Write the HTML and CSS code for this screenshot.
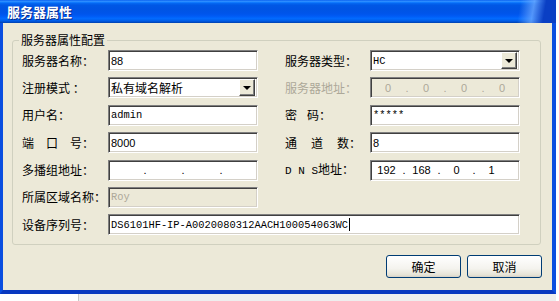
FILE: index.html
```html
<!DOCTYPE html>
<html>
<head>
	<meta charset="UTF-8">
	<title>服务器属性</title>
	<link rel="stylesheet" href="styles.css">
</head>
<body>
	<div class="window">
		<div class="titlebar"><span class="title">服务器属性</span></div>
		<div class="client">
			<fieldset class="group">
				<legend>服务器属性配置</legend>
				<div class="form">
					<label class="lbl">服务器名称：</label>
					<div class="field sans">88</div>
					<span></span>
					<label class="lbl">服务器类型：</label>
					<div class="field combo mono"><span class="val">HC</span><span class="drop"></span></div>

					<label class="lbl">注册模式 ：</label>
					<div class="field combo cjk"><span class="val">私有域名解析</span><span class="drop"></span></div>
					<span></span>
					<label class="lbl off">服务器地址：</label>
					<div class="field ip disabled">
						<span class="seg">0</span><span class="dot">.</span>
						<span class="seg">0</span><span class="dot">.</span>
						<span class="seg">0</span><span class="dot">.</span>
						<span class="seg">0</span>
					</div>

					<label class="lbl">用户名：</label>
					<div class="field mono">admin</div>
					<span></span>
					<label class="lbl"><span class="sp10">密</span>码：</label>
					<div class="field mono">*****</div>

					<label class="lbl"><span class="sp12">端口</span>号：</label>
					<div class="field sans">8000</div>
					<span></span>
					<label class="lbl"><span class="sp14">通道</span>数：</label>
					<div class="field sans">8</div>

					<label class="lbl">多播组地址：</label>
					<div class="field ip">
						<span class="seg"></span><span class="dot">.</span>
						<span class="seg"></span><span class="dot">.</span>
						<span class="seg"></span><span class="dot">.</span>
						<span class="seg"></span>
					</div>
					<span></span>
					<label class="lbl"><span class="dns">D N S</span>地址：</label>
					<div class="field ip dnsip">
						<span class="seg">192</span><span class="dot">.</span>
						<span class="seg">168</span><span class="dot">.</span>
						<span class="seg">0</span><span class="dot">.</span>
						<span class="seg">1</span>
					</div>

					<label class="lbl">所属区域名称：</label>
					<div class="field mono disabled">Roy</div>
					<span></span>
					<span></span>
					<span></span>

					<label class="lbl">设备序列号：</label>
					<div class="field mono wide">DS6101HF-IP-A0020080312AACH100054063WC<span class="caret"></span></div>
				</div>
			</fieldset>
			<div class="buttons">
				<button class="btn">确定</button>
				<button class="btn">取消</button>
			</div>
		</div>
	</div>
	<div class="below"><div class="below-white"></div><div class="below-grey"></div></div>
</body>
</html>
```

FILE: styles.css
```css
*{
	margin: 0;
	padding: 0;
	box-sizing: border-box;
}
body{
	background: #fff;
	font-family: "Noto Sans CJK SC", "Liberation Sans", sans-serif;
	font-size: 12px;
	color: #000;
}
.window{
	width: 556px;
}
.titlebar{
	height: 23px;
	background:
		linear-gradient(100deg, rgba(0,0,0,0) 93%, rgba(110,170,255,.75) 95.5%, #0a3fc4 97.6%),
		linear-gradient(to bottom, #0058ee 0%, #3593ff 5%, #127dff 10%, #0262ee 16%, #0057e5 24%, #0054e3 40%, #0055eb 60%, #005bf5 70%, #026afe 80%, #0062ef 88%, #0052d6 94%, #0040ab 100%);
	display: flex;
	align-items: center;
	padding-left: 7px;
}
.title{
	color: #fff;
	font-weight: bold;
	font-size: 13px;
	line-height: 16px;
	text-shadow: 1px 1px 0 #0a2a8a;
}
.client{
	background: #ece9d8;
	border-left: 3px solid #0a4ee0;
	border-right: 4px solid #0a4ee0;
	border-bottom: 4px solid #0838c0;
	height: 271px;
	display: flex;
	flex-direction: column;
}
.group{
	margin: 9px 11px 0 9px;
	border: 1px solid #d0d0bf;
	border-radius: 3px;
	padding: 2px 9px 9px 9px;
}
.group legend{
	margin-left: -3px;
	padding: 0 2px;
	color: #0046d5;
	color: #000;
	line-height: 16px;
}
.form{
	display: grid;
	grid-template-columns: 86px 150px 27px 85px 150px;
	grid-auto-rows: 21px;
	row-gap: 6.4px;
}
.lbl{
	align-self: center;
	white-space: nowrap;
	line-height: 16px;
}
.lbl.off{
	color: #aca899;
}
.sp10{
	letter-spacing: 10px;
}
.sp12{
	letter-spacing: 12px;
}
.sp14{
	letter-spacing: 14px;
}
.dns{
	font-family: "Liberation Mono", monospace;
	font-size: 11px;
}
.field{
	background: #fff;
	border: 1px solid;
	border-color: #7f7f7f #fff #fff #7f7f7f;
	box-shadow: inset 1px 1px 0 #404040, inset -1px -1px 0 #d4d0c8;
	padding: 0 2px;
	display: flex;
	align-items: center;
	white-space: nowrap;
	overflow: hidden;
}
.field.disabled{
	background: #ece9d8;
	color: #aca899;
}
.sans{
	font-family: "Liberation Sans", sans-serif;
	font-size: 11px;
}
.mono{
	font-family: "Liberation Mono", monospace;
	font-size: 10.4px;
}
.cjk{
	font-size: 12px;
}
.combo{
	padding-right: 2px;
}
.combo .val{
	flex: 1;
}
.drop{
	width: 16px;
	height: 17px;
	background: #ece9d8;
	border: 1px solid;
	border-color: #fff #404040 #404040 #fff;
	box-shadow: inset -1px -1px 0 #808080;
	display: flex;
	align-items: center;
	justify-content: center;
}
.drop::after{
	content: "";
	border-left: 4px solid transparent;
	border-right: 4px solid transparent;
	border-top: 4px solid #000;
}
.ip{
	font-family: "Liberation Sans", sans-serif;
	font-size: 11px;
	padding: 0;
}
.ip .seg{
	flex: 1;
	text-align: center;
}
.ip .dot{
	width: 4px;
	text-align: center;
}
.dnsip{
	padding-right: 12px;
}
.wide{
	grid-column: 2 / 6;
}
.caret{
	display: inline-block;
	width: 1px;
	height: 13px;
	background: #000;
	margin-left: 1px;
}
.buttons{
	display: flex;
	justify-content: flex-end;
	gap: 6px;
	margin: 10px 10px 0 0;
}
.btn{
	width: 75px;
	height: 23px;
	border: 1px solid #003c74;
	border-radius: 3px;
	background: linear-gradient(to bottom, #fff 0%, #f4f3ee 60%, #e6e3d6 90%, #d6d0c5 100%);
	font-family: "Noto Sans CJK SC", sans-serif;
	font-size: 12px;
	color: #000;
}
.below{
	display: flex;
	height: 7px;
}
.below-white{
	width: 78px;
}
.below-grey{
	width: 478px;
	background: #eeeeee;
	border-left: 1px solid #c8c8c8;
}
```
